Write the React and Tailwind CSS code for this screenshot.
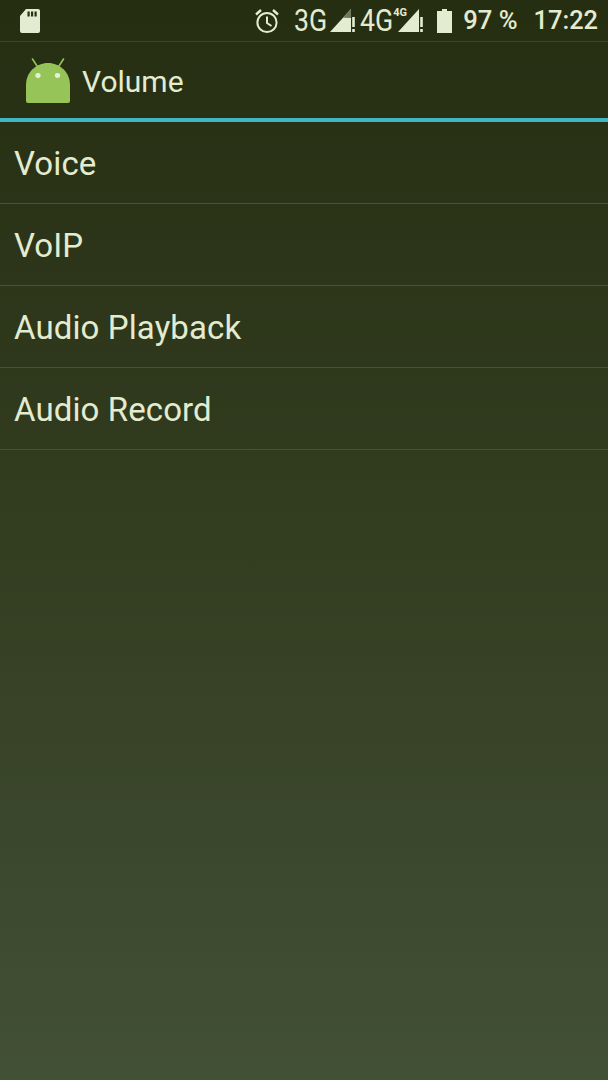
const Sd = () => (
  <svg width="20" height="24" viewBox="0 0 20 24" className="block">
    <path d="M6 0H18a2 2 0 0 1 2 2V22a2 2 0 0 1-2 2H2a2 2 0 0 1-2-2V7z" fill="#e3ebd0" />
    <rect x="7.5" y="2.5" width="2.2" height="5" fill="#2a3015" />
    <rect x="11" y="2.5" width="2.2" height="5" fill="#2a3015" />
    <rect x="14.5" y="2.5" width="2.2" height="5" fill="#2a3015" />
  </svg>
);

const Alarm = () => (
  <svg width="26" height="26" viewBox="0 0 26 26" fill="none" stroke="#e3ebd0" strokeWidth="2" className="block">
    <circle cx="13" cy="14.5" r="9.6" />
    <path d="M13 8.5V15l4.5 3" />
    <path d="M2 6.5 7 2M24 6.5 19 2" strokeWidth="2.4" />
  </svg>
);

const Signal = ({ dim }) => (
  <svg width="25" height="24" viewBox="0 0 25 24" className="block">
    <path d="M0 23 L21 0 V23Z" fill="#e3ebd0" />
    {dim && <path d="M13 8.8 L21 0 V9Z" fill="#6f7860" />}
    <rect x="22.2" y="8" width="2.6" height="10" fill="#e3ebd0" />
    <rect x="22.2" y="20" width="2.6" height="3" fill="#e3ebd0" />
  </svg>
);

const Battery = () => (
  <svg width="15" height="24" viewBox="0 0 15 24" className="block">
    <path d="M5 0H10V2H15V24H0V2H5Z" fill="#e3ebd0" />
  </svg>
);

const Android = () => (
  <svg width="44" height="46" viewBox="0 0 44 46" className="block">
    <path d="M6.5 2 11 9M37.5 2 33 9" stroke="#97c459" strokeWidth="1.6" strokeLinecap="round" />
    <path d="M0 44V28C0 15.5 10 6 22 6S44 15.5 44 28V44a2 2 0 0 1-2 2H2a2 2 0 0 1-2-2Z" fill="#97c459" />
    <ellipse cx="12" cy="18.5" rx="2.6" ry="2.4" fill="#e6efd9" />
    <ellipse cx="31.5" cy="18.5" rx="2.6" ry="2.4" fill="#e6efd9" />
  </svg>
);

const Net = ({ children }) => (
  <span className="block w-[33px] text-[31px] leading-none font-normal origin-left scale-x-[0.86] whitespace-nowrap">
    {children}
  </span>
);

const items = ["Voice", "VoIP", "Audio Playback", "Audio Record"];

export default function App() {
  return (
    <div
      className="w-[608px] h-[1080px] overflow-hidden bg-gradient-to-b from-[#262e12] via-[#333d20] via-50% to-[#425036] text-[#e3ebd0]"
      style={{ fontFamily: "Roboto, sans-serif" }}
    >
      <div className="h-[42px] flex items-center pl-[20px] pr-[10px] border-b border-[#3d4329]">
        <Sd />
        <div className="ml-auto flex items-center">
          <Alarm />
          <span className="ml-[14px]"><Net>3G</Net></span>
          <span className="ml-[3px]"><Signal dim /></span>
          <span className="ml-[5px]"><Net>4G</Net></span>
          <span className="relative w-[25px] h-[24px] ml-[5px]">
            <Signal />
            <span className="absolute left-[-5px] top-[-2px] text-[11px] leading-none font-bold">4G</span>
          </span>
          <span className="ml-[14px]"><Battery /></span>
          <span className="ml-[11px] text-[25.6px] leading-none font-medium">97 %</span>
          <span className="ml-[16px] text-[25.4px] leading-none font-medium">17:22</span>
        </div>
      </div>
      <div className="h-[76px] flex items-center pl-[26px]">
        <Android />
        <span className="ml-[12px] pt-[4px] text-[30px] leading-none">Volume</span>
      </div>
      <div className="h-[4px] bg-[#3fb8c4]" />
      <div>
        {items.map((t) => (
          <div key={t} className="h-[82px] flex items-center pl-[14px] pt-[2px] border-b border-[#4a5039] text-[33px] tracking-[0.1px]">
            {t}
          </div>
        ))}
      </div>
    </div>
  );
}
